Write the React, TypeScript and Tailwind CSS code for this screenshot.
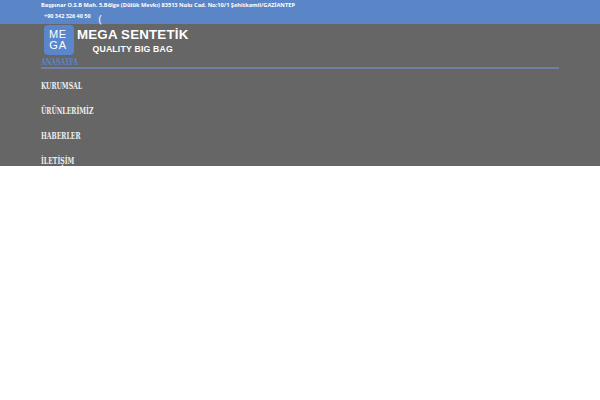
const menu = ['KURUMSAL', 'ÜRÜNLERİMİZ', 'HABERLER', 'İLETİŞİM'];

function Logo() {
  return (
    <div className="ml-[3px] flex h-[31px] items-start">
      <div className="grid h-[30px] w-[30px] grid-cols-[10px_8px] grid-rows-[11px_11px] place-content-center place-items-center rounded-[4px] bg-[#5a86cb] pr-[3px] font-['Liberation_Sans',sans-serif] text-[11px] leading-[11px] font-normal text-white">
        <span>M</span>
        <span>E</span>
        <span>G</span>
        <span>A</span>
      </div>
      <div className="ml-[3px] flex flex-col items-center pt-[1px] font-['Liberation_Sans',sans-serif] text-white">
        <span className="text-[13.3px] leading-[18px] font-bold tracking-[0.2px] whitespace-nowrap">MEGA SENTETİK</span>
        <span className="mt-[-2px] text-[8.7px] leading-[14px] font-bold tracking-[0.2px] whitespace-nowrap">QUALITY BIG BAG</span>
      </div>
    </div>
  );
}

export default function App() {
  return (
    <div className="h-[400px] w-[600px] overflow-hidden bg-white">
      <div className="h-[166px] overflow-hidden bg-[#666666]">
        <div className="h-[24px] bg-[#5a86c8] px-[41px] pt-[1px] font-['Open_Sans',sans-serif] text-[5.65px] leading-[9px] font-bold text-white">
          <div className="whitespace-nowrap">Başpınar O.S.B Mah. 5.Bölge (Dülük Mevkı) 83513 Nolu Cad. No:10/1 Şehitkamil/GAZİANTEP</div>
          <div className="mt-[2px] ml-[3px] flex items-start">
            <span className="text-[5.5px]">+90 342 326 40 50</span>
            <span className="mt-[1px] ml-[8px] text-[11px] leading-[12px] font-normal">(</span>
          </div>
        </div>
        <div className="mx-[41px] flex flex-col pt-[1px] font-['DejaVu_Serif',serif]">
          <Logo />
          <div className="h-[13px] border-b-2 border-[#717ea6] text-[9px] leading-[13px] font-bold text-[#5a86c8]">
            <span className="inline-block origin-left scale-x-[0.68]">ANASAYFA</span>
          </div>
          <ul className="mt-[5px]">
            {menu.map((item) => (
              <li key={item} className="h-[25px] text-[9px] leading-[25px] font-bold whitespace-nowrap text-[#eeeeee]">
                <span className="inline-block origin-left scale-x-[0.68]">{item}</span>
              </li>
            ))}
          </ul>
        </div>
      </div>
    </div>
  );
}
